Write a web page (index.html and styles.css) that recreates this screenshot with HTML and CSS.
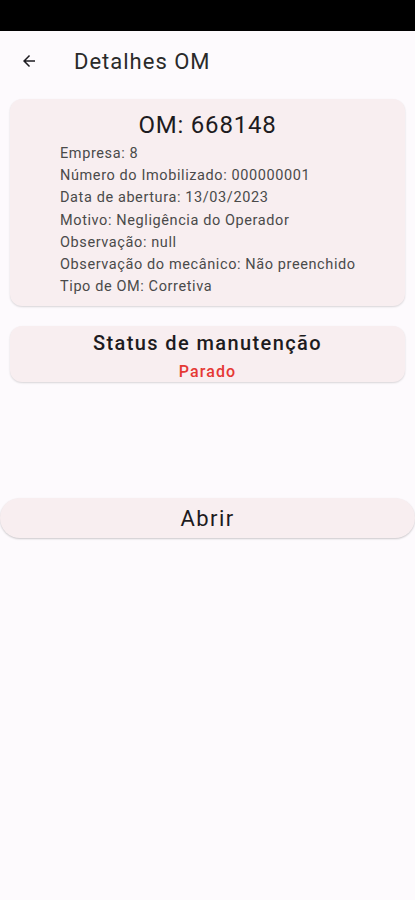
FILE: index.html
```html
<!DOCTYPE html>
<html lang="pt-BR">
<head>
    <meta charset="UTF-8">
    <meta name="viewport" content="width=device-width, initial-scale=1.0">
    <title>Detalhes OM</title>
    <link rel="stylesheet" href="styles.css">
</head>
<body>
    <div class="status-bar"></div>

    <header class="app-bar">
        <button class="back" aria-label="Voltar">
            <svg width="18" height="18" viewBox="0 0 24 24">
                <path d="M20 11H7.83l5.59-5.59L12 4l-8 8 8 8 1.41-1.41L7.83 13H20v-2z" fill="#1d1b20"/>
            </svg>
        </button>
        <h1>Detalhes OM</h1>
    </header>

    <main class="content">
        <section class="card details">
            <h2>OM: 668148</h2>
            <ul class="info">
                <li>Empresa: 8</li>
                <li>Número do Imobilizado: 000000001</li>
                <li>Data de abertura: 13/03/2023</li>
                <li>Motivo: Negligência do Operador</li>
                <li>Observação: null</li>
                <li>Observação do mecânico: Não preenchido</li>
                <li>Tipo de OM: Corretiva</li>
            </ul>
        </section>

        <section class="card status">
            <h3>Status de manutenção</h3>
            <span class="state">Parado</span>
        </section>

        <button class="open">Abrir</button>
    </main>
</body>
</html>
```

FILE: styles.css
```css
body {
    font-family: 'Roboto', 'Noto Sans', sans-serif;
    margin: 0;
    padding: 0;
    background-color: #fdfafd;
    color: #1d1b20;
    min-height: 100vh;
}

.status-bar {
    height: 31px;
    background-color: #000;
}

.app-bar {
    display: flex;
    align-items: center;
    height: 60px;
    padding-left: 20px;
}

.back {
    display: flex;
    align-items: center;
    justify-content: center;
    background: none;
    border: none;
    padding: 0;
    width: 18px;
    height: 18px;
    margin-right: 36px;
}

.app-bar h1 {
    margin: 0;
    font-size: 22px;
    font-weight: 400;
    letter-spacing: 1px;
    color: #2a2a2a;
}

.content {
    display: flex;
    flex-direction: column;
}

.card {
    background-color: #f8eef0;
    border-radius: 12px;
    margin: 0 10px;
    box-shadow: 0 1px 2px rgba(0, 0, 0, 0.15);
}

.details {
    margin-top: 8px;
    padding: 12px 0 8px 50px;
}

.details h2 {
    margin: 0 0 4px -50px;
    text-align: center;
    font-size: 24px;
    font-weight: 400;
    letter-spacing: 0.8px;
    color: #1d1b20;
}

.info {
    list-style: none;
    margin: 0;
    padding: 0;
}

.info li {
    font-size: 14.5px;
    line-height: 22.2px;
    letter-spacing: 0.6px;
    color: #4a4a4a;
}

.status {
    margin-top: 20px;
    height: 56px;
    box-sizing: border-box;
    padding-top: 4px;
    display: flex;
    flex-direction: column;
    align-items: center;
}

.status h3 {
    margin: 0;
    font-size: 20px;
    font-weight: 500;
    letter-spacing: 1.4px;
    line-height: 26px;
}

.state {
    margin-top: 6px;
    font-size: 16px;
    font-weight: 500;
    letter-spacing: 1.1px;
    color: #e53935;
    line-height: 20px;
}

.open {
    margin-top: 116px;
    height: 40px;
    background-color: #f8eef0;
    border: none;
    border-radius: 20px;
    box-shadow: 0 1px 2px rgba(0, 0, 0, 0.2);
    font-family: 'Roboto', 'Noto Sans', sans-serif;
    font-size: 22px;
    letter-spacing: 1.4px;
    color: #1d1b20;
    cursor: pointer;
}
```
